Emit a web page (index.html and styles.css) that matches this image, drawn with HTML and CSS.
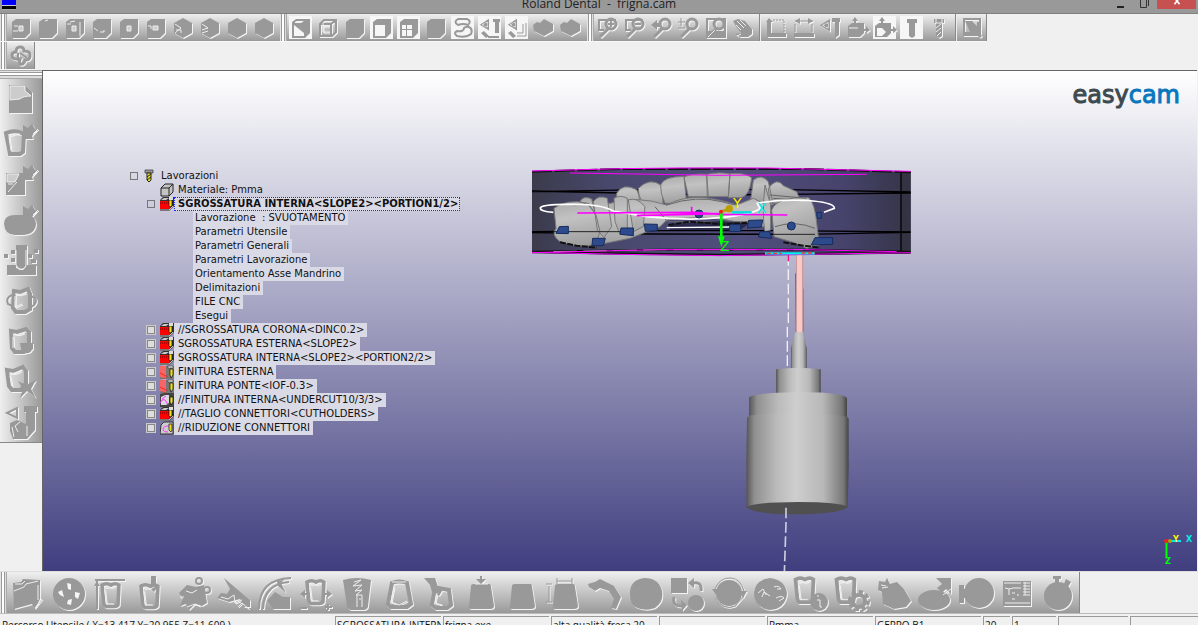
FILE: index.html
```html
<!DOCTYPE html>
<html lang="it">
<head>
<meta charset="utf-8">
<title>Roland Dental - frigna.cam</title>
<link rel="stylesheet" href="styles.css">
</head>
<body>
<svg class="sprite" aria-hidden="true">
  <defs>
    <symbol id="cube" viewBox="0 0 24 24"><path d="M3 6L7 3H21V17L16 22H3Z"/></symbol>
    <symbol id="hex" viewBox="0 0 24 24"><path d="M12 2L21 7V17L12 22L3 17V7Z"/></symbol>
    <symbol id="slab" viewBox="0 0 24 24"><path d="M1 9L5 6L8 7L12 3L21 8V15L12 20L2 15Z"/></symbol>
    <symbol id="lens" viewBox="0 0 24 24"><circle class="g3" cx="15" cy="8" r="5"/><path class="g3" d="M12 13L4 21"/></symbol>
    <symbol id="eye" viewBox="0 0 24 24"><path d="M1 8L12 1V15Z"/><path class="h" d="M4 8L10 5V11Z"/><circle cx="8" cy="8" r="2"/></symbol>
    <symbol id="block3d" viewBox="0 0 24 24"><path d="M2 10L6 7H18V17L14 21H2Z"/><path d="M9 1L12 5H6ZM8 4H10V8H8ZM17 13H20V10L24 14L20 17V15H17Z"/></symbol>
    <symbol id="toothfill" viewBox="0 0 36 36"><path d="M8 11Q8 9 11 9H26Q28 9 28 12L31 31Q31 34 27 34H8Q5 34 6 31Z"/></symbol>
    <symbol id="toothline" viewBox="0 0 36 36"><path class="g4" d="M9 8Q14 5 19 8Q24 5 28 8L27 30Q26 32 23 32H14Q12 32 11 28Z"/><path class="h" d="M12 11Q17 9 20 11L24 9M12 13L14 29H22"/></symbol>
    <symbol id="burst" viewBox="0 0 36 36"><path d="M20 4L25 7L29 3L32 8L34 9L29 15L30 18H20Z"/><path class="h" d="M30 13L35 8"/></symbol>
    <symbol id="mill" viewBox="0 0 14 14"><path d="M0 3L3 0H14V9L9 14H0Z" fill="#333"/><path d="M1 3L4 1H9L6 3Z" fill="#ccc"/><path d="M0 4H10V12H0Z" fill="#f00"/><path d="M9 3H12V9L10 10L9 9Z" fill="#e8e020" stroke="#111" stroke-width=".7"/><path d="M9 0H13V3H9Z" fill="#ddd"/><path d="M0 6H9" stroke="#600" stroke-dasharray="1 1"/><path d="M0 13H9L13 9" stroke="#bbb" fill="none"/></symbol>
    <symbol id="finish" viewBox="0 0 14 14"><path d="M0 1H14V14H0Z" fill="#777"/><path d="M0 1L6 0V13L0 12Z" fill="#eaa"/><path d="M1 1V12M3 1V13M0 8L8 12M5 1V14" stroke="#f22" fill="none"/><path d="M10 4H13V10L11 13L10 10Z" fill="#e8e020" stroke="#111" stroke-width=".7"/><path d="M8 1H13V3H8Z" fill="#ddd" stroke="#333" stroke-width=".5"/></symbol>
    <symbol id="under" viewBox="0 0 14 14"><path d="M0 1L4 0H14V14H0Z" fill="#444"/><path d="M1 4L5 2H9V10L6 12H1Z" fill="#d8d8de"/><path d="M0 10Q4 2 8 12M2 6L6 3" stroke="#f3f" fill="none"/><path d="M10 4H13V9L11 12L10 9Z" fill="#e8e020" stroke="#111" stroke-width=".7"/></symbol>
    <linearGradient id="disc"><stop offset="0" stop-color="#3b3b4c"/><stop offset=".2" stop-color="#48486c"/><stop offset=".55" stop-color="#504e7c"/><stop offset=".82" stop-color="#46446c"/><stop offset="1" stop-color="#343446"/></linearGradient>
    <linearGradient id="steel"><stop offset="0" stop-color="#555"/><stop offset=".08" stop-color="#909090"/><stop offset=".3" stop-color="#bbb"/><stop offset=".48" stop-color="#cecece"/><stop offset=".75" stop-color="#b8b8b8"/><stop offset=".95" stop-color="#777"/><stop offset="1" stop-color="#444"/></linearGradient>
    <linearGradient id="enamel" x2=".3" y2="1"><stop offset="0" stop-color="#a4a4a4"/><stop offset=".45" stop-color="#c2c2c2"/><stop offset="1" stop-color="#9c9c9c"/></linearGradient>
  </defs>
</svg>

<header class="titlebar">
  <span class="app-mark"></span>
  <h1 class="title">Roland Dental&nbsp; -&nbsp; frigna.cam</h1>
  <div class="window-buttons">
    <button type="button" class="win" aria-label="Riduci"><svg viewBox="0 0 12 12"><path d="M4 7H11" stroke="#222" stroke-width="2"/></svg></button>
    <button type="button" class="win" aria-label="Ripristina"><svg viewBox="0 0 12 12"><path d="M4.500 0V7.500H10.500V0M12.500 0V6" stroke="#333" fill="none"/></svg></button>
    <button type="button" class="win close" aria-label="Chiudi"><svg viewBox="0 0 12 12"><path d="M3 2L9 10M9 2L3 10" stroke="#fff" stroke-width="2"/></svg></button>
  </div>
</header>

<nav class="bars" aria-label="Strumenti">
  <div class="toolbar">
    <span class="grip"></span>
    <button type="button" class="tool" aria-label="Vista da sinistra"><svg viewBox="0 0 24 24"><use href="#cube"/><path class="l" d="M10 10H14V15H10Z"/><path class="h" d="M5 10H9M4 15H9"/></svg></button>
    <button type="button" class="tool" aria-label="Vista dall'alto"><svg viewBox="0 0 24 24"><use href="#cube"/><path class="h" d="M9 5L12 4"/></svg></button>
    <button type="button" class="tool" aria-label="Vista frontale"><svg viewBox="0 0 24 24"><use href="#cube"/><path class="l" d="M9 10H13V15H9Z"/><path class="h" d="M4 8H8M7 6L12 5M17 6V20"/></svg></button>
    <button type="button" class="tool" aria-label="Vista dal basso"><svg viewBox="0 0 24 24"><use href="#cube"/><path class="h" d="M4 12L8 15M10 16H14V14"/></svg></button>
    <button type="button" class="tool" aria-label="Vista posteriore"><svg viewBox="0 0 24 24"><use href="#cube"/><path class="l" d="M10 10H14V15H10Z"/></svg></button>
    <button type="button" class="tool" aria-label="Vista da destra"><svg viewBox="0 0 24 24"><use href="#cube"/><path class="l" d="M9 10H14V14H9Z"/><path class="h" d="M4 10H7V13"/></svg></button>
    <button type="button" class="tool" aria-label="Isometrica 1"><svg viewBox="0 0 24 24"><use href="#hex"/><path class="h" d="M4 8L10 12L4 17M5 14H10V17"/></svg></button>
    <button type="button" class="tool" aria-label="Isometrica 2"><svg viewBox="0 0 24 24"><use href="#hex"/><path class="h" d="M4 8L10 12L4 14M4 17L10 15"/></svg></button>
    <button type="button" class="tool" aria-label="Isometrica 3"><svg viewBox="0 0 24 24"><use href="#hex"/></svg></button>
    <button type="button" class="tool" aria-label="Isometrica 4"><svg viewBox="0 0 24 24"><use href="#hex"/></svg></button>
    <span class="gap"></span>
    <span class="grip"></span>
    <button type="button" class="tool on" aria-label="Ombreggiato"><svg viewBox="0 0 24 24"><use href="#cube"/><path class="w" d="M5 9L15 17V20H5ZM6 6L8 5H15L12 7H6Z"/></svg></button>
    <button type="button" class="tool" aria-label="Fil di ferro"><svg viewBox="0 0 24 24"><path class="g2" d="M4 8L8 4H20V16L16 20H4ZM4 8H15V20M15 8L20 4"/><path class="h" d="M7 7V16H14M7 10H14"/></svg></button>
    <button type="button" class="tool" aria-label="Solido"><svg viewBox="0 0 24 24"><use href="#cube"/></svg></button>
    <button type="button" class="tool on" aria-label="Pezzo grezzo"><svg viewBox="0 0 24 24"><use href="#cube"/><path class="w" d="M5 9H15V20H5Z"/></svg></button>
    <button type="button" class="tool on" aria-label="Griglia"><svg viewBox="0 0 24 24"><use href="#cube"/><path class="w" d="M5 9H9V13H5ZM10 9H15V13H10ZM5 14H9V20H5ZM10 14H15V20H10Z"/></svg></button>
    <button type="button" class="tool" aria-label="Blocco"><svg viewBox="0 0 24 24"><use href="#cube"/></svg></button>
    <button type="button" class="tool on" aria-label="Curve"><svg viewBox="0 0 24 24"><path class="g2" d="M7 3H16Q21 5 17 9Q12 7 7 9Q2 6 7 3ZM18 11Q22 13 20 18Q15 22 6 20Q2 17 6 15Q13 16 13 12Q15 10 18 11Z"/></svg></button>
    <button type="button" class="tool on" aria-label="Mostra utensile"><svg viewBox="0 0 24 24"><use href="#eye" x="1" y="2" width="20" height="20"/><path d="M15 3H22V6H21V17H17V6H15ZM3 17L6 15L11 20L8 22Z"/><path class="g2" d="M10 21H21"/></svg></button>
    <button type="button" class="tool on" aria-label="Mostra percorso"><svg viewBox="0 0 24 24"><use href="#eye" x="2" y="2" width="20" height="20"/><path d="M3 17L6 15L11 20L8 22Z"/><path class="g1" d="M12 20H21V7M12 17H18V8"/></svg></button>
    <button type="button" class="tool" aria-label="Modello"><svg viewBox="0 0 24 24"><use href="#slab"/></svg></button>
    <button type="button" class="tool" aria-label="Modello lavorato"><svg viewBox="0 0 24 24"><use href="#slab"/></svg></button>
    <span class="gap"></span>
    <span class="grip"></span>
    <button type="button" class="tool" aria-label="Zoom tutto"><svg viewBox="0 0 24 24"><path class="g2" d="M2 4H20M3 4V14H8"/><use href="#lens"/><path class="g2" d="M12 8H18M15 5V11"/></svg></button>
    <button type="button" class="tool" aria-label="Zoom finestra"><svg viewBox="0 0 24 24"><path class="g2" d="M2 4H20M3 4V14H8"/><use href="#lens"/><path class="g2" d="M12 8H18"/></svg></button>
    <button type="button" class="tool" aria-label="Zoom precedente"><svg viewBox="0 0 24 24"><use href="#lens"/><path d="M1 9L7 4V7H11V11H7V14Z"/></svg></button>
    <button type="button" class="tool" aria-label="Zoom dinamico"><svg viewBox="0 0 24 24"><use href="#lens"/><path class="g1" d="M1 6H8M4 2V10M1 12H8"/></svg></button>
    <button type="button" class="tool" aria-label="Zoom area"><svg viewBox="0 0 24 24"><path class="g2" d="M3 3H21V21H3Z"/><path d="M3 15H21V21H3Z"/><use href="#lens"/><path class="h" d="M4 21L11 14"/></svg></button>
    <button type="button" class="tool" aria-label="Sposta"><svg viewBox="0 0 24 24"><path d="M2 5L7 3L14 5L21 13V18L17 21H9L4 18L10 17L6 12Z"/><path class="h" d="M6 5L13 12M9 4L15 10M5 9L10 14M6 20L10 18"/></svg></button>
    <span class="sep"></span>
    <button type="button" class="tool" aria-label="Origine"><svg viewBox="0 0 24 24"><path d="M4 2L8 6H6V17H21V21H2V6H1Z"/><path class="g1" d="M8 4H19V16" stroke-dasharray="2 1"/></svg></button>
    <button type="button" class="tool" aria-label="Quota"><svg viewBox="0 0 24 24"><path d="M2 17H22V21H2Z"/><path class="g1" d="M3 5H21M3 8V16M20 8V16"/><path d="M8 2V8L3 5ZM16 2V8L21 5Z"/></svg></button>
    <button type="button" class="tool" aria-label="Vista utensile"><svg viewBox="0 0 24 24"><use href="#eye" y="2" width="22" height="22"/><path d="M13 2H21V6H20V19L16 22V6H13Z"/></svg></button>
    <button type="button" class="tool" aria-label="Orientamento"><svg viewBox="0 0 24 24"><use href="#block3d"/><path class="h" d="M3 12H12"/></svg></button>
    <button type="button" class="tool on" aria-label="Pezzo"><svg viewBox="0 0 24 24"><use href="#block3d"/><path class="w" d="M4 12H9L13 16L9 20H4Z"/></svg></button>
    <button type="button" class="tool on" aria-label="Utensile"><svg viewBox="0 0 24 24"><path d="M7 3H17V7H15V20L12 22L9 20V7H7Z"/></svg></button>
    <button type="button" class="tool" aria-label="Fresa"><svg viewBox="0 0 24 24"><path d="M7 3H17V7H15V20L12 22L9 20V7H7Z"/><path class="h" d="M9 3V7H15V3M14 8L9 12M14 12L9 16M14 16L10 20"/></svg></button>
    <span class="sep"></span>
    <button type="button" class="tool" aria-label="Schermo"><svg viewBox="0 0 24 24"><path class="g2" d="M3 3H19V19H3Z"/><path d="M4 5H11L16 10V6H18V16L21 20L19 22L15 18H4V16H9Z"/></svg></button>
    <span class="edge"></span>
  </div>
  <div class="toolbar">
    <span class="grip"></span>
    <button type="button" class="tool" aria-label="Assistente"><svg viewBox="0 0 24 24"><path class="g3" d="M7 8Q7 3 11 3T15 7Q22 7 21 12Q21 16 16 16Q15 21 11 20Q10 17 11 15Q3 16 3 11Q3 8 7 8Z"/><path class="g2" d="M9 9V14M11 9L18 14"/></svg></button>
    <span class="edge"></span>
  </div>
</nav>

<div class="work">
  <aside class="side">
    <span class="grip flat"></span>
    <div class="side-tools">
      <button type="button" class="tool" aria-label="Nuovo"><svg viewBox="0 0 36 36"><path d="M6 4H22L29 11V32H6Z"/><path class="l" d="M7 5H22V10L26 13L28 15Q20 15 17 18L7 19Z"/></svg></button>
      <button type="button" class="tool" aria-label="Apri dente"><svg viewBox="0 0 36 36"><path class="g4" d="M3 12Q10 9 16 11L21 13L20 31L17 33H7Z"/><path class="h" d="M6 15Q12 12 17 13M6 16L8 30"/><use href="#burst"/></svg></button>
      <button type="button" class="tool" aria-label="Importa"><svg viewBox="0 0 36 36"><path d="M3 11H22V33H3Z"/><path class="l" d="M4 12H16L12 20H4Z"/><path class="h" d="M5 22H10M5 30L14 20"/><use href="#burst"/></svg></button>
      <button type="button" class="tool" aria-label="Disco"><svg viewBox="0 0 36 36"><path d="M1 22Q1 13 12 13H24Q33 14 33 22Q32 33 19 33H12Q2 33 1 22Z"/><use href="#burst"/></svg></button>
      <button type="button" class="tool" aria-label="Lavora"><svg viewBox="0 0 36 36"><path d="M4 23H13V26L17 28H20L24 24V23H33V33H4ZM13 3H24V24L20 27H17L13 24Z"/><path d="M8 8H12V12H8ZM1 12H5V16H1ZM8 16H12V20H8ZM25 12H29V16H25ZM31 7H35V11H31ZM28 17H33V21H28Z"/><path class="h" d="M13 8V23L16 27H20L23 24V8"/></svg></button>
      <button type="button" class="tool" aria-label="Ruota dente"><svg viewBox="0 0 36 36"><path class="g4" d="M11 8L17 9L25 6L27 11V26L22 29H13L10 25Z"/><path class="h" d="M12 11Q17 13 23 10M12 13V24L19 21"/><path class="g2" d="M9 12Q2 15 5 21L9 23M28 13Q36 16 31 22L28 24"/></svg></button>
      <button type="button" class="tool" aria-label="Dente libero"><svg viewBox="0 0 36 36"><path class="g4" d="M8 8L14 9L23 6L26 9V27L21 29H12L9 25Z"/><path class="h" d="M11 11Q16 13 21 10M10 14V25"/><path d="M17 20H30V26L26 30H19Z"/></svg></button>
      <button type="button" class="tool" aria-label="Taglia"><svg viewBox="0 0 36 36"><path class="g4" d="M4 7L10 8L20 4L23 8V20L18 27H9L6 23Z"/><path class="h" d="M7 10Q12 12 18 8M7 13L9 23"/><path d="M15 18L23 22L33 17L28 26L33 35L24 28L17 35L20 26Z"/></svg></button>
      <button type="button" class="tool" aria-label="Fissa"><svg viewBox="0 0 36 36"><path d="M21 2H34V8H32V26L24 35H10L7 27V19L14 16L23 20V8H21Z"/><path class="g2" d="M4 9L14 4V14Z"/><path class="h" d="M17 18L12 22L15 28M9 23L11 33M24 22V32"/></svg></button>
    </div>
  </aside>

  <main class="view">
    <svg class="scene" viewBox="43 71 1154 500" role="img" aria-label="Disco dentale con fresa">
      <g transform="translate(730 240) scale(.333333)">
        <path d="M175 45V260M172 260V385" stroke="#f2f2f6" stroke-width="4" stroke-dasharray="32 11" fill="none"/>
        <path d="M175 30V64" stroke="#f08" stroke-width="4"/>
        <path d="M197 100V276H219V146" stroke="#555" stroke-width="3" fill="none"/>
        <path d="M198 35H220V278H196Z" fill="#c99b9b"/><path d="M201 35H216V278H201Z" fill="#fac8c8"/>
        <path d="M195 277H219L230 325V390H183V325Z" fill="url(#steel)"/>
        <path d="M138 388Q205 378 272 388V468H138Z" fill="url(#steel)"/>
        <path d="M57 472Q75 458 205 457T351 474V545H57Z" fill="url(#steel)"/>
        <path d="M51 533L60 526Q205 508 351 530L356 536V680L353 803H49V658Z" fill="url(#steel)"/>
        <path d="M49 801Q80 786 205 786T353 801Q330 822 202 823T49 801Z" fill="#505050"/>
        <path d="M168 803V850L163 1000" stroke="#ccccdc" stroke-width="5" stroke-dasharray="32 11" fill="none"/>
      </g>
      <g transform="translate(520 155) scale(.333333)">
        <path d="M36 50Q300 37 605 38T1172 50V293Q900 302 605 302T36 293Z" fill="url(#disc)"/>
        <path d="M1143 50H1172V292H1143Z" fill="#333344"/><path d="M1143 50V292" stroke="#000" stroke-width="4"/>
        <path d="M36 110L420 103L800 104L1172 111M36 108L300 114L600 120L1172 114M36 230L420 227H800L1172 231M36 233L400 237L850 238L1172 232" stroke="#000" stroke-width="4" fill="none"/>
        <path d="M36 50L300 42H860L1172 52" stroke="#111" stroke-width="6" stroke-dasharray="60 8" fill="none"/>
        <path d="M36 290L420 284H850L1172 290M36 292L600 299L1172 293" stroke="#111" stroke-width="6" fill="none"/>
        <path d="M100 290L420 284H850" stroke="#aaa" stroke-width="3" stroke-dasharray="70 20" fill="none"/>
        <g fill="url(#enamel)" stroke="#777" stroke-width="3">
          <path d="M290 115Q308 82 350 104L370 150H290ZM355 100Q390 65 425 92L430 155H360ZM700 75Q725 55 745 80L760 150H690ZM745 100Q770 65 790 92L830 110L845 145H750Z"/>
          <path d="M422 90Q430 65 492 64L500 145H435Q420 115 422 90ZM492 66Q515 55 560 58L565 125H505ZM560 58Q600 50 630 57L625 125H562ZM630 56Q675 52 695 68Q690 120 665 128H625Z"/>
          <path d="M270 145Q350 120 440 150Q520 105 650 150L700 130L740 150V215H690Q600 175 440 195L420 215L330 250L230 270L200 240V160Z"/>
          <path d="M102 160Q140 130 205 145L228 180L240 230L228 265Q190 285 120 260Q92 240 108 220ZM180 140Q190 120 215 132L225 175L205 150ZM220 140Q235 118 262 130L275 215L252 248L232 225ZM282 130Q300 118 322 130V220L300 238L285 200ZM325 135Q350 125 375 155L370 215L340 230Z"/>
          <path d="M735 90L752 150V225L735 230Q725 180 735 90ZM755 165Q770 125 865 128Q885 140 892 220L898 270L860 280L820 262L762 245Z"/>
        </g>
        <path d="M440 150Q530 120 605 140L645 150M440 200H690M765 215Q825 195 885 220M405 155L438 195M750 120L860 130M760 130L870 138" stroke="#666" stroke-width="3" fill="none"/>
        <path d="M450 208L600 198L690 205L660 225H450Z" fill="#2a2a4c"/>
        <path d="M445 210L510 200L610 208L690 203M120 262L170 272L230 278M790 262L850 272L900 278" stroke="#111" stroke-width="6" stroke-dasharray="18 4" fill="none"/>
        <path d="M440 218L640 216" stroke="#fff" stroke-width="4"/>
        <path d="M102 230H330M760 238H885" stroke="#222" stroke-width="3"/>
        <path d="M100 172Q60 170 61 158Q70 147 150 148Q240 146 280 168L380 185Q500 198 600 188T720 160L712 145Q790 130 880 138Q945 145 943 160L912 172" stroke="#fff" stroke-width="5" fill="none"/>
        <g fill="#2d4b8c" stroke="#162c5c" stroke-width="3">
          <path d="M118 215L145 214V236L108 235ZM303 219H340V242L300 238ZM373 207L412 208V227L376 229ZM218 250H256L250 272H216ZM630 208L662 209V230L628 229ZM686 196L728 195L724 216L682 219ZM720 230H748L755 250L715 246ZM885 248H938V268L874 270ZM890 172H904V190H892Z"/>
          <circle cx="537" cy="177" r="12"/><circle cx="814" cy="213" r="12"/>
        </g>
        <path d="M172 174L520 172L604 178L802 180M350 182L600 176M515 155V176" stroke="#f0f" stroke-width="5" fill="none"/>
        <path d="M36 48L300 41L480 39H740L1172 49M150 54L600 61L1040 58M36 293L420 284H850L1130 290M36 292L300 298L600 302L1172 293" stroke="#f0f" stroke-width="3" fill="none"/>
        <path d="M735 295H885" stroke="#0ee" stroke-width="7"/><path d="M740 295H785M845 294H885" stroke="#f33" stroke-width="4" stroke-dasharray="12 7"/>
        <path d="M604 172V245" stroke="#0f0" stroke-width="8"/><path d="M594 244H614L604 276Z" fill="#0f0"/>
        <path d="M604 170L635 160" stroke="#b99b00" stroke-width="9"/><circle cx="628" cy="161" r="11" fill="#b9a000"/><path d="M636 172H695" stroke="#0dd" stroke-width="7"/><circle cx="603" cy="170" r="6" fill="#e22"/>
      </g>
      <text class="axis yellow" x="733" y="208">Y</text>
      <text class="axis cyan" x="757" y="213">X</text>
      <text class="axis green" x="720" y="251">Z</text>
      <path d="M1166.500 542V557" stroke="#0f0" stroke-width="2"/><path d="M1169 541H1181" stroke="#0ee" stroke-width="2"/><circle cx="1170" cy="541" r="2" fill="#b9a000"/><circle cx="1166" cy="541" r="2" fill="#e22"/>
      <text class="axis mini yellow" x="1173" y="542">Y</text>
      <text class="axis mini cyan" x="1186" y="542">X</text>
      <text class="axis mini green" x="1165" y="564">Z</text>
    </svg>

    <ul class="tree">
      <li><div class="row"><input type="checkbox" class="box" aria-label="Lavorazioni"><svg class="ico" viewBox="0 0 14 14"><path d="M2 1H10V4H2Z" fill="#999" stroke="#333" stroke-width=".7"/><path d="M4 4H8V11L6 13L4 11Z" fill="#e8e020" stroke="#222"/><path d="M4 8L8 5M4 11L8 8" stroke="#222"/></svg><span class="label clear">Lavorazioni</span></div>
        <ul class="level">
          <li class="row"><span class="nobox"></span><svg class="ico" viewBox="0 0 14 14"><path d="M1 5L5 1H13V9L9 13H1ZM1 5H9V13M9 5L13 1" fill="#c4c4c4" stroke="#222"/></svg><span class="label clear">Materiale: Pmma</span></li>
          <li><div class="row"><input type="checkbox" class="box" aria-label="Sgrossatura interna 1"><svg class="ico"><use href="#mill"/></svg><span class="label selected">SGROSSATURA INTERNA&lt;SLOPE2&gt;&lt;PORTION1/2&gt;</span></div>
            <ul class="details">
              <li class="row"><span class="label">Lavorazione&nbsp; : SVUOTAMENTO</span></li>
              <li class="row"><span class="label">Parametri Utensile</span></li>
              <li class="row"><span class="label">Parametri Generali</span></li>
              <li class="row"><span class="label">Parametri Lavorazione</span></li>
              <li class="row"><span class="label">Orientamento Asse Mandrino</span></li>
              <li class="row"><span class="label">Delimitazioni</span></li>
              <li class="row"><span class="label">FILE CNC</span></li>
              <li class="row"><span class="label">Esegui</span></li>
            </ul>
          </li>
          <li class="row"><input type="checkbox" class="box lit" aria-label="Sgrossatura corona"><svg class="ico"><use href="#mill"/></svg><span class="label">//SGROSSATURA CORONA&lt;DINC0.2&gt;</span></li>
          <li class="row"><input type="checkbox" class="box lit" aria-label="Sgrossatura esterna"><svg class="ico"><use href="#mill"/></svg><span class="label">SGROSSATURA ESTERNA&lt;SLOPE2&gt;</span></li>
          <li class="row"><input type="checkbox" class="box lit" aria-label="Sgrossatura interna 2"><svg class="ico"><use href="#mill"/></svg><span class="label">SGROSSATURA INTERNA&lt;SLOPE2&gt;&lt;PORTION2/2&gt;</span></li>
          <li class="row"><input type="checkbox" class="box lit" aria-label="Finitura esterna"><svg class="ico"><use href="#finish"/></svg><span class="label">FINITURA ESTERNA</span></li>
          <li class="row"><input type="checkbox" class="box lit" aria-label="Finitura ponte"><svg class="ico"><use href="#finish"/></svg><span class="label">FINITURA PONTE&lt;IOF-0.3&gt;</span></li>
          <li class="row"><input type="checkbox" class="box lit" aria-label="Finitura interna"><svg class="ico"><use href="#under"/></svg><span class="label">//FINITURA INTERNA&lt;UNDERCUT10/3/3&gt;</span></li>
          <li class="row"><input type="checkbox" class="box lit" aria-label="Taglio connettori"><svg class="ico"><use href="#mill"/></svg><span class="label">//TAGLIO CONNETTORI&lt;CUTHOLDERS&gt;</span></li>
          <li class="row"><input type="checkbox" class="box lit" aria-label="Riduzione connettori"><svg class="ico" viewBox="0 0 14 14"><path d="M1 4L4 1H13V13H0Z" fill="#ccc" stroke="#333"/><path d="M9 5Q3 5 3 8T8 11" stroke="#f3f" fill="none"/><path d="M9 3H12V9L11 11L9 9Z" fill="#e8e020" stroke="#111" stroke-width=".7"/></svg><span class="label">//RIDUZIONE CONNETTORI</span></li>
        </ul>
      </li>
    </ul>
    <div class="brand">easy<span class="brand-cam">cam</span></div>
  </main>
</div>

<nav class="bottom" aria-label="Lavorazioni dentali">
  <span class="grip"></span>
  <div class="bottom-tools">
    <button type="button" class="tool" aria-label="Apri"><svg viewBox="0 0 36 36"><path d="M3 8L11 7L13 4L30 5V24L25 34L22 29L4 34Z"/><path class="h" d="M4 16L14 12L16 9L28 6M5 9L12 9L15 6M28 10V25M25 33L32 24"/></svg></button>
    <button type="button" class="tool" aria-label="Disco"><svg viewBox="0 0 36 36"><circle cx="18" cy="19" r="16"/><path class="w" d="M16 8L20 9V15L17 14ZM7 17L11 15L13 22L9 20ZM24 17L29 18L27 24L24 22ZM17 25L21 24L20 30L16 29Z"/></svg></button>
    <button type="button" class="tool" aria-label="Altezza"><svg viewBox="0 0 36 36"><path class="g2" d="M3 5H33M5 6V34"/><path d="M2 11L5 6L8 11Z"/><use href="#toothline" x="2" y="3" width="32" height="32"/></svg></button>
    <button type="button" class="tool" aria-label="Perno"><svg viewBox="0 0 36 36"><path d="M18 1H23V14L21 17L18 14Z"/><use href="#toothline" x="0" y="4" width="32" height="32"/></svg></button>
    <button type="button" class="tool" aria-label="Connettori"><svg viewBox="0 0 36 36"><path d="M8 14L12 10L21 12L29 10L32 28L27 31L20 29L14 35L11 29L5 31L8 24L4 18Z"/><circle class="g2" cx="24" cy="6" r="3"/><circle class="g2" cx="32" cy="15" r="3"/><path class="h" d="M11 16L17 18L22 15M5 22H9M12 32L20 29L25 31"/></svg></button>
    <button type="button" class="tool" aria-label="Rimuovi"><svg viewBox="0 0 36 36"><path d="M8 3L34 25V32H28L24 24L13 27L1 23L5 18L11 19L14 14Z"/><path class="h" d="M5 22L12 24L18 20L19 28L26 25M22 32L26 28L33 34"/></svg></button>
    <button type="button" class="tool" aria-label="Angolo"><svg viewBox="0 0 36 36"><path class="g2" d="M2 34Q2 4 34 3M6 34Q7 9 32 7"/><path d="M10 26L18 17L26 22H33V34H16ZM20 6L27 5L24 8L29 18L21 11Z"/></svg></button>
    <button type="button" class="tool" aria-label="Scala"><svg viewBox="0 0 36 36"><use href="#toothline" x="1" y="0" width="32" height="32"/><path d="M2 19L7 15V23ZM34 19L29 15V23Z"/><path class="g2" d="M2 33H9M27 32H34M30 29V35M5 19H11M25 19H31"/></svg></button>
    <button type="button" class="tool" aria-label="Vite"><svg viewBox="0 0 36 36"><path d="M4 5Q18 1 32 5L29 31Q29 34 25 35H12Q8 34 8 31Z"/><path class="h" d="M15 7L22 5L14 11L23 10L16 16L23 15L17 20L23 20V32M18 20V32M20 24H22"/></svg></button>
    <button type="button" class="tool" aria-label="Corona"><svg viewBox="0 0 36 36"><path class="g4" d="M11 8Q18 5 26 8L30 29L26 32H10L7 29Z"/><path class="h" d="M11 7H25M13 12L10 27L18 30L26 26"/></svg></button>
    <button type="button" class="tool" aria-label="Intaglio"><svg viewBox="0 0 36 36"><path d="M2 3H13L16 12L22 13L17 21L10 17L8 10Z"/><path class="g4" d="M12 18L16 13L27 15L29 30L25 33H14L10 30Z"/><path class="h" d="M15 18L13 28L20 30"/></svg></button>
    <button type="button" class="tool" aria-label="Inserisci"><svg viewBox="0 0 36 36"><use href="#toothfill"/><path class="h" d="M12 9H25"/><path d="M17 1H19V4H23L18 9L13 4H17Z"/></svg></button>
    <button type="button" class="tool" aria-label="Dente"><svg viewBox="0 0 36 36"><use href="#toothfill"/></svg></button>
    <button type="button" class="tool" aria-label="Misura"><svg viewBox="0 0 36 36"><use href="#toothfill" x="1" width="36" height="36"/><path class="g1" d="M11 6H26M11 3V9M26 3V9M3 11V27M0 9H6M0 27H6"/></svg></button>
    <button type="button" class="tool" aria-label="Ponte"><svg viewBox="0 0 36 36"><path d="M1 9L8 7L13 4L19 7L27 11L34 22L29 34L24 33L27 24L22 16L13 13L8 16L2 12Z"/></svg></button>
    <button type="button" class="tool" aria-label="Disco pieno"><svg viewBox="0 0 36 36"><path d="M2 18Q2 5 16 3Q31 3 34 16Q36 27 27 33Q17 37 7 32Q2 29 2 18Z"/></svg></button>
    <button type="button" class="tool" aria-label="Converti"><svg viewBox="0 0 36 36"><path d="M2 3H18V18H2Z"/><circle cx="27" cy="28" r="8"/><path class="g3" d="M24 8Q33 6 32 16M14 31Q3 32 5 22"/><path d="M19 8L25 3V13ZM12 25L18 30L13 36Z"/></svg></button>
    <button type="button" class="tool" aria-label="Ruota"><svg viewBox="0 0 36 36"><circle cx="18" cy="18" r="13"/><path class="g1" d="M3 16Q8 2 20 3Q30 4 33 16M4 23Q12 36 24 31L33 21"/><path d="M1 14H8L5 20ZM29 16H36L32 23Z"/></svg></button>
    <button type="button" class="tool" aria-label="Arcata"><svg viewBox="0 0 36 36"><path d="M18 3Q34 5 35 19Q33 34 18 35Q2 33 2 18Q3 5 18 3Z"/><path class="h" d="M6 18L11 14L14 20M10 22L12 17L18 21M22 12Q27 10 29 14H25M24 23Q30 20 32 23L27 26"/></svg></button>
    <button type="button" class="tool" aria-label="Informazioni"><svg viewBox="0 0 36 36"><use href="#toothline" x="-6" y="-3" width="34" height="34"/><circle cx="26" cy="27" r="9"/><path class="h" d="M25 20V22M24 25H27V32H29"/></svg></button>
    <button type="button" class="tool" aria-label="Impostazioni"><svg viewBox="0 0 36 36"><use href="#toothline" x="-6" y="-3" width="34" height="34"/><circle class="g4" cx="25" cy="26" r="6"/><circle class="teeth" cx="25" cy="26" r="9"/></svg></button>
    <button type="button" class="tool" aria-label="Pulisci"><svg viewBox="0 0 36 36"><path d="M3 6L9 7L11 3L14 9L21 7L28 14L35 26L30 32L18 34L7 29L6 17L2 15Z"/><path class="h" d="M5 10L10 11M6 13L12 12"/></svg></button>
    <button type="button" class="tool" aria-label="Esporta"><svg viewBox="0 0 36 36"><ellipse cx="17" cy="25" rx="16" ry="10"/><path d="M19 3H34V19L29 14L25 18L20 13L25 9Z"/><path class="h" d="M26 20L34 14"/></svg></button>
    <button type="button" class="tool" aria-label="Fissaggio"><svg viewBox="0 0 36 36"><circle cx="21" cy="18" r="15"/><path d="M1 10H6V14H10V23H6V28H1Z"/></svg></button>
    <button type="button" class="tool" aria-label="Tabella"><svg viewBox="0 0 36 36"><path d="M4 6H32V31H4Z"/><path class="h" d="M5 8H22M24 8H31M24 11H31M24 14H31M24 17H31M24 20H31M26 7V20M6 13Q10 15 14 13H22M10 14V20M13 18H16M18 20H20M13 24H16M6 28H31"/></svg></button>
    <button type="button" class="tool" aria-label="Tempo"><svg viewBox="0 0 36 36"><circle cx="18" cy="21" r="14"/><path d="M13 1H21V4H19V9H15V4H13ZM26 4L31 7L28 12L24 9Z"/></svg></button>
  </div>
</nav>

<footer class="status">
  <span class="cell plain">Percorso Utensile ( X=13.417 Y=20.955 Z=11.609 )</span>
  <span class="cell">SGROSSATURA INTERNA</span>
  <span class="cell">frigna.exe</span>
  <span class="cell">alta qualità fresa 20</span>
  <span class="cell"></span>
  <span class="cell">Pmma</span>
  <span class="cell">GEPPO B1</span>
  <span class="cell">20</span>
  <span class="cell">1</span>
  <span class="cell"></span>
  <span class="cell"></span>
</footer>
</body>
</html>
```

FILE: styles.css
```css
* { box-sizing: border-box; }

body {
  margin: 0;
  height: 100vh;
  display: flex;
  flex-direction: column;
  overflow: hidden;
  background: #f0f0f0;
  color: #111;
  font-family: "Open Sans", "Noto Sans", sans-serif;
}

button {
  margin: 0;
  padding: 0;
  border: 0;
  background: none;
}

ul { list-style: none; margin: 0; padding: 0; }

.sprite { position: absolute; width: 0; height: 0; }

/* Title bar */
.titlebar {
  flex: none;
  height: 14px;
  display: grid;
  grid-template-columns: 1fr auto 1fr;
  background: #999;
  border-bottom: 1px solid #808080;
  overflow: hidden;
}
.app-mark {
  width: 14px;
  height: 10px;
  margin-left: 2px;
  background: linear-gradient(#00f 5px, #ccc 5px 6px, #000 6px 9px, #aaa 9px);
}
.title {
  margin: 0;
  height: 12px;
  font-size: 12px;
  font-weight: 400;
  line-height: 8px;
  color: #222;
}
.window-buttons { display: flex; justify-content: flex-end; align-items: flex-start; }
.win { width: 23px; height: 9px; display: flex; align-items: flex-end; justify-content: center; }
.win svg { width: 12px; height: 12px; flex: none; overflow: visible; }
.win:not(.close) svg { margin-bottom: -3px; }
.win.close { width: 39px; margin: 0 2px 0 4px; background: #c75050; }
.win.close svg { width: 10px; height: 10px; margin-bottom: 3px; }

/* Toolbars */
.bars { flex: none; }
.toolbar { display: flex; height: 28px; align-items: stretch; border-bottom: 1px solid #f8f8f8; width: max-content; background: linear-gradient(#efefef, #999); }
.grip {
  flex: none;
  width: 7px;
  background: linear-gradient(90deg, #e4e4e4 1px, #999 1px 2px, #fff 2px 4px, #999 4px 5px, #ddd 5px 6px, #aaa 6px);
}
.grip.flat {
  width: auto;
  height: 9px;
  background: linear-gradient(#aaa 1px, #e4e4e4 1px 2px, #999 2px 3px, #fff 3px 5px, #999 5px 6px, #ddd 6px 8px, #aaa 8px);
}
.gap { width: 3px; }
.sep { width: 7px; background: linear-gradient(90deg, transparent 3px, #888 3px 4px, #eee 4px 5px, transparent 5px); }
.edge { width: 1px; background: #888; }
.tool { width: 27px; display: flex; align-items: center; justify-content: center; }
.tool svg { flex: none; width: 24px; height: 24px; fill: #999; filter: drop-shadow(1px 1px 0 #f4f4f4); }
.tool.on { background: #f6f6f6 content-box; padding: 2px; }

.g1, .g2, .g3, .g4 { fill: none; stroke: #999; }
.g1 { stroke-width: 1px; }
.g2 { stroke-width: 2px; }
.g3 { stroke-width: 3px; }
.g4 { stroke-width: 4px; }
.h { fill: none; stroke: #eee; stroke-width: 1px; }
.w { fill: #f6f6f6; }
.l { fill: #ccc; stroke: #eee; }
.teeth { fill: none; stroke: #999; stroke-width: 4px; stroke-dasharray: 4 3; }

/* Work area */
.work { flex: 1; min-height: 0; display: flex; }
.side { flex: none; width: 42px; display: flex; flex-direction: column; }
.side-tools {
  flex: 0 1 364px;
  display: flex;
  flex-direction: column;
  background: linear-gradient(90deg, #efefef, #999);
  border-bottom: 1px solid #888;
}
.side-tools .tool { flex: 1; width: auto; }
.side-tools .tool svg, .bottom-tools .tool svg { width: 36px; height: 36px; }

.view {
  flex: 1;
  min-width: 0;
  position: relative;
  display: flex;
  justify-content: space-between;
  align-items: flex-start;
  margin-right: 1px;
  border: 1px solid #666;
  border-width: 1px 0 0 1px;
  background: linear-gradient(#fff, #403e7f);
}
.scene { position: absolute; inset: 0; width: 100%; height: 100%; }
.axis { font: 14px "DejaVu Sans", sans-serif; }
.mini { font-size: 8px; font-weight: 700; }
.yellow { fill: #fe0; }
.cyan { fill: #0ee; }
.green { fill: #0f0; }

.brand {
  position: relative;
  margin: 10px 17px 0 0;
  font: 24px/28px "DejaVu Sans", sans-serif;
  color: #3d4a50;
  -webkit-text-stroke: 1px currentColor;
}
.brand-cam { color: #0877bd; }

/* Operation tree */
.tree {
  position: relative;
  margin: 98px 0 0 87px;
  font: 10px/14px "DejaVu Sans", Verdana, sans-serif;
}
.row { display: flex; align-items: center; height: 14px; white-space: nowrap; }
.level { padding-left: 17px; }
.details { padding-left: 46px; }
.box {
  appearance: none;
  flex: none;
  width: 8px;
  height: 8px;
  margin: 0 5px 0 0;
  border: 1px solid #777;
}
.box.lit { background: #ddd; border-color: #888; box-shadow: 0 0 0 1px #ccc; }
.nobox { width: 13px; }
.ico { flex: none; width: 14px; height: 14px; }
.label { padding: 0 3px 0 4px; background: #dadae6; color: #111; }
.details .label { padding-left: 2px; }
.clear { background: none; }
.selected { height: 14px; line-height: 12px; padding: 0 1px 0 3px; font-weight: 700; border: 1px dotted #22f; }

/* Bottom toolbar */
.bottom {
  flex: none;
  height: 43px;
  display: flex;
  border-top: 1px solid #ddd;
  border-bottom: 1px solid #bbb;
}
.bottom-tools {
  flex: 0 1 1073px;
  display: flex;
  background: linear-gradient(#efefef, #999);
  border-right: 1px solid #888;
}
.bottom-tools .tool { flex: 1; min-width: 0; }

/* Status bar */
.status {
  flex: none;
  height: 11px;
  padding-top: 2px;
  display: grid;
  grid-template-columns: 333fr 106fr 106fr 106fr 106fr 106fr 106fr 27fr 44fr 70fr 68fr;
  gap: 2px;
  overflow: hidden;
}
.cell {
  height: 20px;
  min-width: 0;
  padding-left: 1px;
  overflow: hidden;
  white-space: nowrap;
  font-size: 10px;
  line-height: 16px;
  border: 1px solid #999;
  border-width: 1px 0 0 1px;
}
.plain { border-color: transparent; }
```
